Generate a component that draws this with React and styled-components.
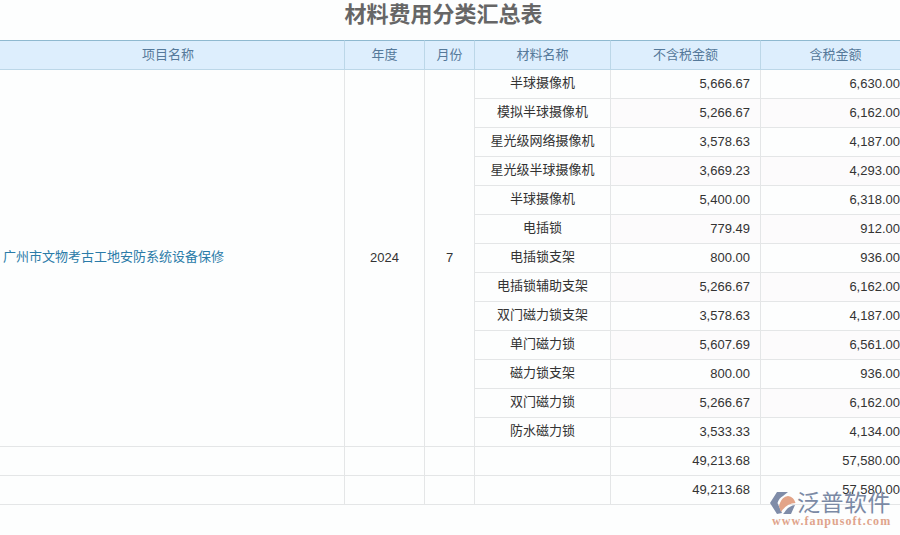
import React from "react";
import styled, { createGlobalStyle } from "styled-components";

const GlobalStyle = createGlobalStyle`
  html, body {
    margin: 0;
    padding: 0;
    background: #fdfefe;
    overflow: hidden;
  }
  body {
    font-family: "Liberation Sans", "Noto Sans CJK SC", sans-serif;
  }
`;

const Page = styled.div`
  position: relative;
  width: 900px;
  height: 535px;
  overflow: hidden;
`;

const Title = styled.h1`
  margin: 0;
  height: 40px;
  padding-right: 13px;
  font-size: 22px;
  line-height: 29px;
  font-weight: bold;
  text-align: center;
  color: #666;
`;

const Table = styled.table`
  width: 900px;
  table-layout: fixed;
  border-collapse: separate;
  border-spacing: 0;
  font-size: 13px;
`;

const Head = styled.th`
  box-sizing: border-box;
  height: 30px;
  padding: 0 ${(p) => p.$right || 0}px 3px ${(p) => p.$left || 0}px;
  font-weight: normal;
  text-align: center;
  color: #55799a;
  background: #ddeefd;
  border-top: 1px solid #8fb9d0;
  border-bottom: 1px solid #bcd7e8;
  border-right: 1px solid #bcd7e8;
  &:last-child {
    border-right: 0;
  }
`;

const Cell = styled.td`
  box-sizing: border-box;
  height: 29px;
  padding: 0 ${(p) => p.$pad || 0}px 2px 0;
  color: #333;
  text-align: ${(p) => p.$align || "center"};
  background: ${(p) => (p.$tint ? "#fcfbfc" : "transparent")};
  border-bottom: 1px solid #e4e6e7;
  border-right: 1px solid #e4e6e7;
  &:last-child {
    border-right: 0;
  }
`;

const NameCell = styled(Cell)`
  padding-bottom: 6px;
`;

const ProjectCell = styled(Cell)`
  padding: 0 0 5px 3px;
  text-align: left;
  color: #2a7ba8;
`;

const Mark = styled.div`
  position: absolute;
  left: 770px;
  top: 490px;
  display: flex;
  flex-direction: column;
  pointer-events: none;
`;

const MarkTop = styled.div`
  display: flex;
  align-items: center;
  gap: 1px;
`;

const MarkName = styled.span`
  font-size: 23px;
  line-height: 26px;
  letter-spacing: 0.5px;
  color: #7b8aa5;
`;

const MarkUrl = styled.span`
  margin-top: -1px;
  padding-left: 2px;
  font-family: "Liberation Serif", serif;
  font-size: 12px;
  font-weight: bold;
  line-height: 12px;
  letter-spacing: 1.05px;
  color: #e0a48c;
`;

const rows = [
  ["半球摄像机", "5,666.67", "6,630.00"],
  ["模拟半球摄像机", "5,266.67", "6,162.00"],
  ["星光级网络摄像机", "3,578.63", "4,187.00"],
  ["星光级半球摄像机", "3,669.23", "4,293.00"],
  ["半球摄像机", "5,400.00", "6,318.00"],
  ["电插锁", "779.49", "912.00"],
  ["电插锁支架", "800.00", "936.00"],
  ["电插锁辅助支架", "5,266.67", "6,162.00"],
  ["双门磁力锁支架", "3,578.63", "4,187.00"],
  ["单门磁力锁", "5,607.69", "6,561.00"],
  ["磁力锁支架", "800.00", "936.00"],
  ["双门磁力锁", "5,266.67", "6,162.00"],
  ["防水磁力锁", "3,533.33", "4,134.00"],
];

function Logo() {
  return (
    <svg width="26" height="24" viewBox="0 0 26 24">
      <path d="M0 12 L7 1 H18 L13 5 Q9 7 7.5 12 L12 22 L7 23 Z" fill="#7f8ca8" />
      <path d="M10 12 Q12 6 18 5 Q24 6 25.5 12 Q17 12 11 21 L9 15 Z" fill="#e3a488" />
      <path d="M14 22 Q18 15 25 14 L21 23 H13 Z" fill="#7f8ca8" />
    </svg>
  );
}

export default function App() {
  return (
    <Page>
      <GlobalStyle />
      <Title>材料费用分类汇总表</Title>
      <Table>
        <colgroup>
          <col style={{ width: 345 }} />
          <col style={{ width: 80 }} />
          <col style={{ width: 50 }} />
          <col style={{ width: 136 }} />
          <col style={{ width: 150 }} />
          <col style={{ width: 139 }} />
        </colgroup>
        <thead>
          <tr>
            <Head $right={8}>项目名称</Head>
            <Head>年度</Head>
            <Head>月份</Head>
            <Head>材料名称</Head>
            <Head>不含税金额</Head>
            <Head $left={10}>含税金额</Head>
          </tr>
        </thead>
        <tbody>
          {rows.map((row, index) => (
            <tr key={index}>
              {index === 0 && (
                <>
                  <ProjectCell rowSpan={rows.length}>广州市文物考古工地安防系统设备保修</ProjectCell>
                  <Cell rowSpan={rows.length}>2024</Cell>
                  <Cell rowSpan={rows.length}>7</Cell>
                </>
              )}
              <NameCell>{row[0]}</NameCell>
              <Cell $align="right" $pad={10} $tint={index % 2 === 1}>{row[1]}</Cell>
              <Cell $align="right" $tint={index % 2 === 1}>{row[2]}</Cell>
            </tr>
          ))}
          {[0, 1].map((i) => (
            <tr key={i}>
              <Cell />
              <Cell />
              <Cell />
              <Cell />
              <Cell $align="right" $pad={10}>49,213.68</Cell>
              <Cell $align="right">57,580.00</Cell>
            </tr>
          ))}
        </tbody>
      </Table>
      <Mark>
        <MarkTop>
          <Logo />
          <MarkName>泛普软件</MarkName>
        </MarkTop>
        <MarkUrl>www.fanpusoft.com</MarkUrl>
      </Mark>
    </Page>
  );
}
